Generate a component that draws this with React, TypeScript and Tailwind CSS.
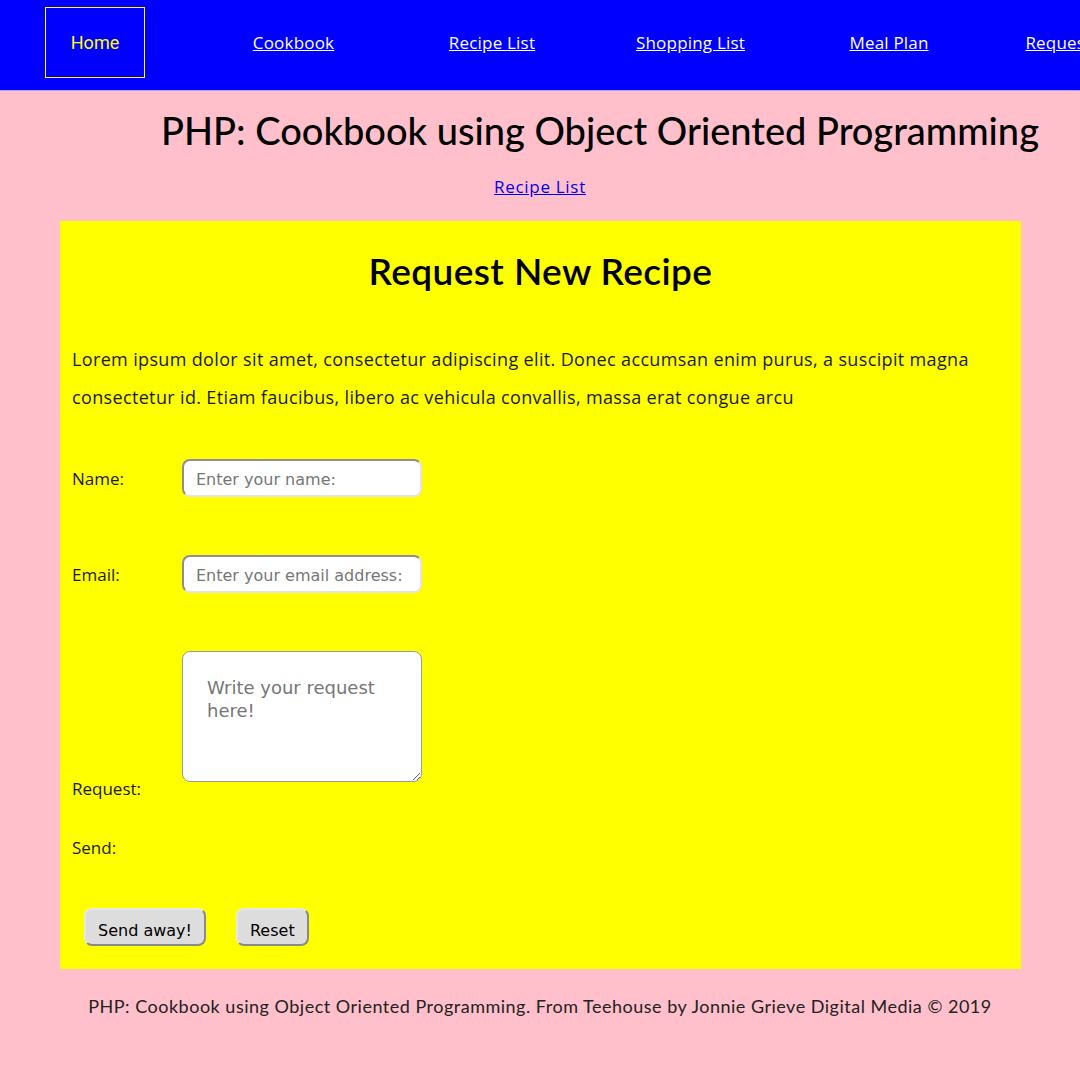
import React from "react";

const navItems = ["Cookbook", "Recipe List", "Shopping List", "Meal Plan", "Request Recipe"];

const inputCls =
  "w-[240px] h-[38px] bg-white rounded-[8px] border-2 border-t-[#8f8f8f] border-l-[#8f8f8f] border-b-[#e4e4e4] border-r-[#e4e4e4] px-[12px] pt-[3px] text-[16px] font-['DejaVu_Sans',Verdana,sans-serif] placeholder:text-[#767676] outline-none";
const btnCls =
  "h-[38px] px-[12px] pt-[7px] bg-[#dddddd] rounded-[8px] border-2 border-t-[#e6e6e6] border-l-[#e6e6e6] border-b-[#8a8a8a] border-r-[#8a8a8a] text-[16px] text-black font-['DejaVu_Sans',Verdana,sans-serif]";

function Row({ label, children, end }: { label: string; children: React.ReactNode; end?: boolean }) {
  return (
    <div
      className={
        end
          ? "flex items-end text-[17px] text-[#1a1a1a] font-['Open_Sans',sans-serif]"
          : "flex items-center text-[17px] text-[#1a1a1a] font-['Open_Sans',sans-serif]"
      }
    >
      <label className={end ? "w-[110px] leading-[20px]" : "w-[110px] pt-[2px]"}>{label}</label>
      {children}
    </div>
  );
}

export default function App() {
  return (
    <div className="w-[1080px] min-h-[1080px] bg-[#ffc0cb] overflow-hidden font-['Lato',sans-serif]">
      <nav className="h-[91px] bg-[#0000ff] border-b border-[#a6a6ff] flex items-start pt-[7px] pl-[45px] gap-[98.5px]">
        <div className="flex-none w-[100px] h-[71px] border border-[#ffff00] flex items-center justify-center text-[#ffff00] text-[18px] font-['Roboto',sans-serif]">
          Home
        </div>
        {navItems.map((n) => (
          <div key={n} className="flex-none w-[100px] h-[71px] flex items-center justify-center">
            <a
              href="#"
              className="whitespace-nowrap text-white underline text-[17px] tracking-[0.2px] font-['Open_Sans',sans-serif]"
            >
              {n}
            </a>
          </div>
        ))}
      </nav>
      <h1 className="mt-[16px] pl-[120px] text-center text-[38px] leading-[46px] text-black font-medium whitespace-nowrap">
        PHP: Cookbook using Object Oriented Programming
      </h1>
      <div className="mt-[22px] text-center text-[17px] leading-[24px] font-['Open_Sans',sans-serif]">
        <a href="#" className="text-[#0000ee] underline tracking-[0.7px]">
          Recipe List
        </a>
      </div>
      <main className="mt-[22px] ml-[60px] w-[961px] bg-[#ffff00] px-[12px] pb-[23px]">
        <h2 className="pt-[28px] text-center text-[37px] leading-[44px] font-semibold text-black tracking-[0.4px]">
          Request New Recipe
        </h2>
        <p className="mt-[47px] text-[18px] leading-[38px] tracking-[0.35px] text-[#1a1a1a] font-['Open_Sans',sans-serif]">
          Lorem ipsum dolor sit amet, consectetur adipiscing elit. Donec accumsan enim purus, a suscipit magna consectetur id. Etiam faucibus, libero ac vehicula convallis, massa erat congue arcu
        </p>
        <div className="mt-[43px] flex flex-col gap-[58px]">
          <Row label="Name:">
            <input placeholder="Enter your name:" className={inputCls} />
          </Row>
          <Row label="Email:">
            <input placeholder="Enter your email address:" className={inputCls} />
          </Row>
          <Row label="Request:" end>
            <textarea
              placeholder="Write your request here!"
              className="block w-[240px] h-[131px] mb-[17px] bg-white rounded-[8px] border border-[#9a9a9a] px-[24px] pt-[24px] text-[18px] leading-[23px] font-['DejaVu_Sans',Verdana,sans-serif] placeholder:text-[#767676] outline-none"
            />
          </Row>
        </div>
        <div className="mt-[39px] text-[17px] leading-[20px] text-[#1a1a1a] font-['Open_Sans',sans-serif]">Send:</div>
        <div className="mt-[50px] ml-[12px] flex gap-[30px]">
          <button className={btnCls}>Send away!</button>
          <button className={btnCls}>Reset</button>
        </div>
      </main>
      <footer className="mt-[25px] text-center text-[18px] leading-[24px] text-[#222] tracking-[0.5px]">
        PHP: Cookbook using Object Oriented Programming. From Teehouse by Jonnie Grieve Digital Media © 2019
      </footer>
    </div>
  );
}
